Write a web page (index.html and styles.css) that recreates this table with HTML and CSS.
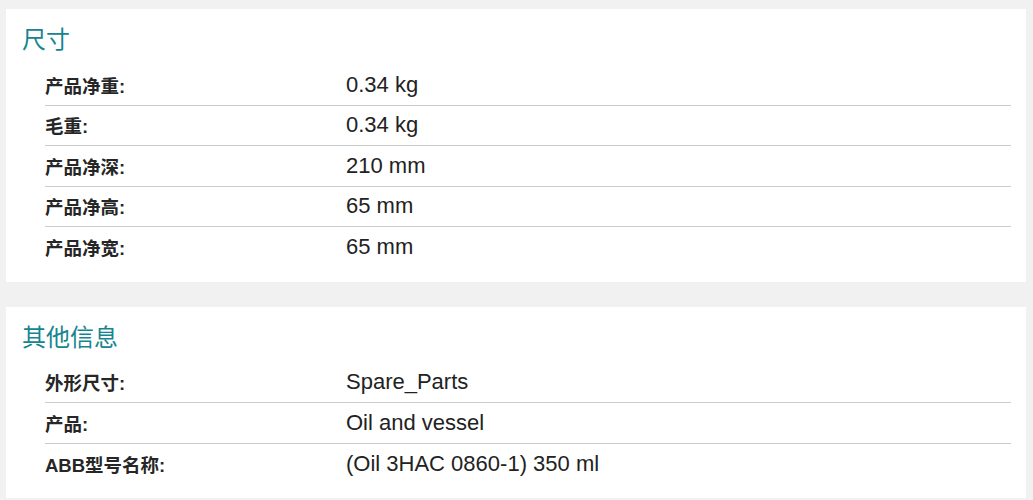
FILE: index.html
```html
<!DOCTYPE html>
<html lang="zh">
<head>
<meta charset="utf-8">
<title>尺寸</title>
<link rel="stylesheet" href="styles.css">
</head>
<body>
<div class="page">
  <section class="card">
    <h2 class="card-title">尺寸</h2>
    <div class="rows">
      <div class="row"><div class="label">产品净重:</div><div class="value">0.34 kg</div></div>
      <div class="row"><div class="label">毛重:</div><div class="value">0.34 kg</div></div>
      <div class="row"><div class="label">产品净深:</div><div class="value">210 mm</div></div>
      <div class="row"><div class="label">产品净高:</div><div class="value">65 mm</div></div>
      <div class="row"><div class="label">产品净宽:</div><div class="value">65 mm</div></div>
    </div>
  </section>
  <section class="card">
    <h2 class="card-title">其他信息</h2>
    <div class="rows">
      <div class="row"><div class="label">外形尺寸:</div><div class="value">Spare_Parts</div></div>
      <div class="row"><div class="label">产品:</div><div class="value">Oil and vessel</div></div>
      <div class="row"><div class="label">ABB型号名称:</div><div class="value">(Oil 3HAC 0860-1) 350 ml</div></div>
    </div>
  </section>
</div>
</body>
</html>
```
FILE: styles.css
```css
html, body {
  margin: 0;
  padding: 0;
  background: #f1f1f1;
}
body {
  font-family: "Liberation Sans", "Noto Sans CJK SC", sans-serif;
  color: #222;
}
.page {
  display: flex;
  flex-direction: column;
  gap: 25px;
  padding: 9px 7px 0 6px;
}
.card {
  background: #ffffff;
  padding: 13px 15px 14px 16px;
}
.card-title {
  margin: 0 0 11px 0;
  font-family: "Noto Sans CJK SC", "Liberation Sans", sans-serif;
  font-weight: 400;
  font-size: 24px;
  line-height: 32px;
  color: #16858f;
}
.rows {
  margin-left: 23px;
  display: flex;
  flex-direction: column;
}
.row {
  box-sizing: border-box;
  height: 40.5px;
  display: flex;
  align-items: center;
  border-bottom: 1px solid #cccccc;
}
.row:last-child {
  border-bottom: none;
}
.label {
  width: 301px;
  flex: none;
  font-weight: 700;
  font-size: 18.5px;
  color: #262626;
}
.value {
  font-size: 22px;
  line-height: 26px;
  color: #222;
}
```
